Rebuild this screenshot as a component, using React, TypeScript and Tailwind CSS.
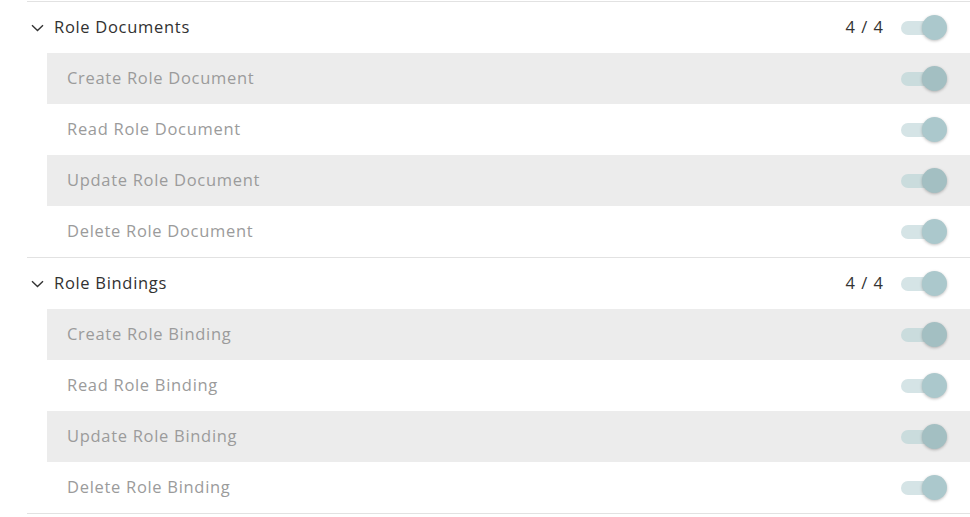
import React from 'react';

interface Section {
  title: string;
  items: string[];
}

const sections: Section[] = [
  {
    title: 'Role Documents',
    items: ['Create Role Document', 'Read Role Document', 'Update Role Document', 'Delete Role Document'],
  },
  {
    title: 'Role Bindings',
    items: ['Create Role Binding', 'Read Role Binding', 'Update Role Binding', 'Delete Role Binding'],
  },
];

// disabled-looking "on" switch
const Toggle: React.FC<{ shaded?: boolean }> = ({ shaded }) => (
  <div className="relative w-[46px] h-[25px] shrink-0">
    <div
      className={`absolute left-0 top-[6px] w-[40px] h-[14px] rounded-full ${
        shaded ? 'bg-[#cadcdd]' : 'bg-[#d5e4e6]'
      }`}
    />
    <div
      className={`absolute right-0 top-0 w-[25px] h-[25px] rounded-full shadow-[0_1px_3px_rgba(0,0,0,0.25)] ${
        shaded ? 'bg-[#a3bfc2]' : 'bg-[#abc8cc]'
      }`}
    />
  </div>
);

const Chevron = () => (
  <svg width="13" height="8" viewBox="0 0 13 8" className="shrink-0">
    <path d="M1 1.2 L6.5 6.5 L12 1.2" fill="none" stroke="#333" strokeWidth="1.4" />
  </svg>
);

const App: React.FC = () => {
  return (
    <div
      className="w-[970px] h-[517px] bg-white pt-px pl-[27px] overflow-hidden"
      style={{ fontFamily: '"Open Sans", Lato, sans-serif' }}
    >
      {sections.map((section) => (
        <div key={section.title} className="border-t border-[#e2e2e2]">
          {/* Section header */}
          <div className="h-[51px] flex items-center pl-[4px] pr-[23px]">
            <Chevron />
            <span className="ml-[10px] text-[16.5px] tracking-[0.7px] text-[#313131]">{section.title}</span>
            <span className="ml-auto mr-[17px] text-[16.5px] text-[#333] tracking-[1px]">
              {section.items.length} / {section.items.length}
            </span>
            <Toggle />
          </div>

          {/* Permission rows */}
          {section.items.map((item, i) => (
            <div
              key={item}
              className={`ml-[20px] h-[51px] flex items-center pl-[20px] pr-[23px] ${
                i % 2 === 0 ? 'bg-[#ececec]' : 'bg-white'
              }`}
            >
              <span className="text-[16.5px] tracking-[0.7px] text-[#9b9b9b]">{item}</span>
              <div className="ml-auto">
                <Toggle shaded={i % 2 === 0} />
              </div>
            </div>
          ))}
        </div>
      ))}
      <div className="border-t border-[#e2e2e2]" />
    </div>
  );
};

export default App;
